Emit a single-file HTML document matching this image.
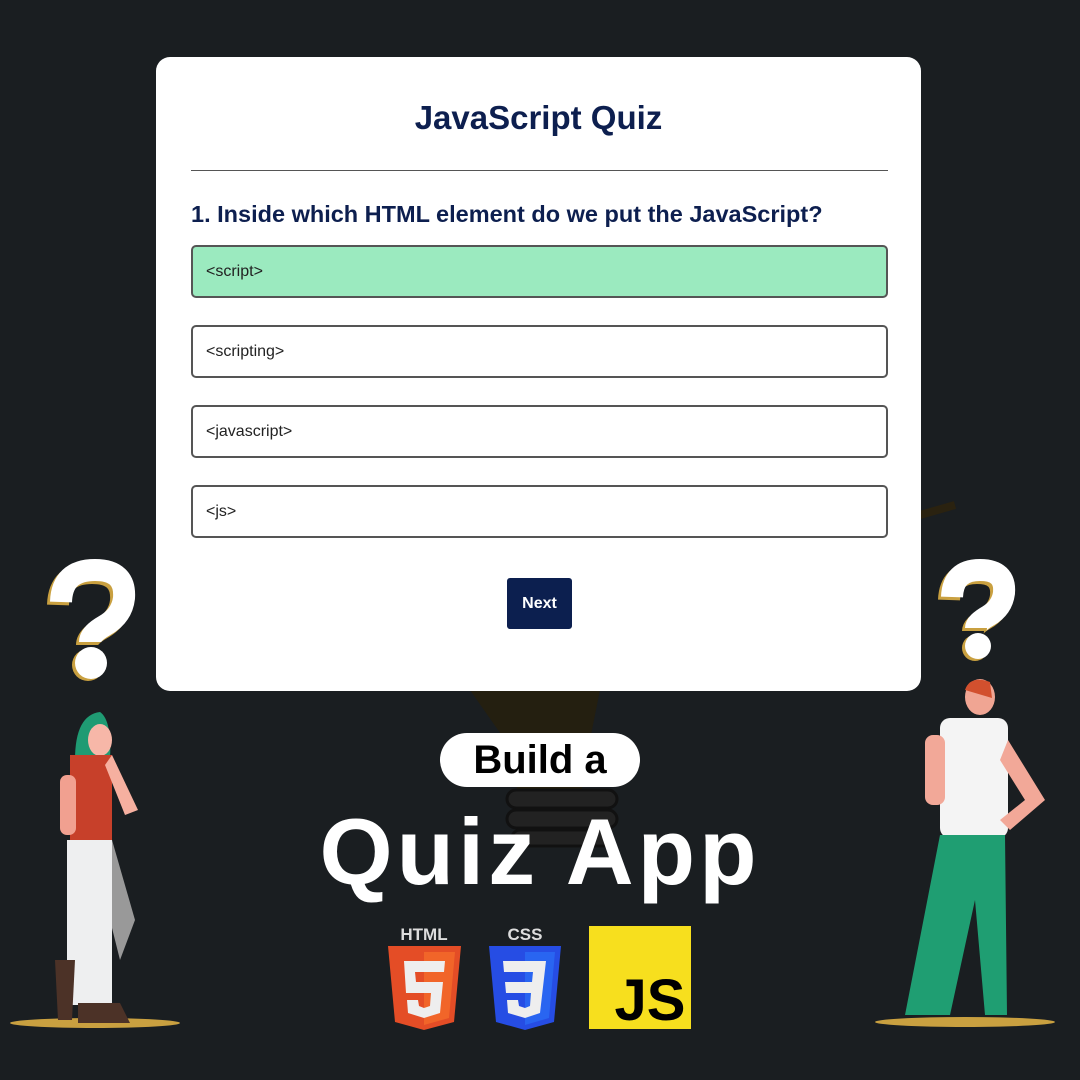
<!DOCTYPE html>
<html><head><meta charset="utf-8"><style>
body{margin:0;width:1080px;height:1080px;background:#1a1e21;position:relative;overflow:hidden;font-family:"Liberation Sans",sans-serif}
.card{position:absolute;left:156px;top:57px;width:765px;height:634px;background:#fff;border-radius:14px}
.t{position:absolute;top:42px;left:0;width:100%;text-align:center;font-size:33px;font-weight:bold;color:#0d1f4f}
.hr{position:absolute;left:35px;top:113px;width:697px;height:1px;background:#555}
.q{position:absolute;left:35px;top:144px;font-size:23.5px;font-weight:bold;color:#0d1f4f}
.o{position:absolute;left:35px;height:49px;border:2px solid #555;border-radius:5px;font-size:16px;color:#222;line-height:49px;padding-left:13px;box-sizing:content-box;width:680px}
.nx{position:absolute;left:351px;top:521px;width:65px;height:51px;background:#0c1f4f;border-radius:3px;color:#fff;font-size:16px;font-weight:bold;text-align:center;line-height:51px}
.pill{position:absolute;left:440px;top:733px;width:200px;height:54px;background:#fff;border-radius:27px;text-align:center;font-size:40px;font-weight:900;line-height:54px;color:#000}
.big{position:absolute;left:0;width:1080px;top:798px;text-align:center;font-size:94px;font-weight:900;color:#fff;letter-spacing:4px}
</style></head><body>
<svg style="position:absolute;left:0;top:0" width="1080" height="1080">
<path d="M470 690 L600 690 L590 740 L580 800 L520 800 L505 740Z" fill="#241f10"/>
<g fill="#222" stroke="#111" stroke-width="3"><rect x="507" y="790" width="110" height="18" rx="9"/><rect x="507" y="810" width="110" height="18" rx="9"/><rect x="512" y="830" width="100" height="16" rx="8"/></g>
<path d="M920 515 L955 505" stroke="#2a2210" stroke-width="8"/>
<g fill="none" stroke-width="22" stroke-linecap="butt">
<path d="M61 602 Q62 570 95 570 Q126 570 124 598 Q122 616 104 626 Q90 634 90 642" stroke="#c9a040" transform="translate(-3,3)"/>
<path d="M61 602 Q62 570 95 570 Q126 570 124 598 Q122 616 104 626 Q90 634 90 642" stroke="#fff"/>
<path d="M952 597 Q953 570 980 570 Q1006 570 1004 593 Q1002 608 988 616 Q976 623 976 628" stroke="#c9a040" transform="translate(-3,3)"/>
<path d="M952 597 Q953 570 980 570 Q1006 570 1004 593 Q1002 608 988 616 Q976 623 976 628" stroke="#fff"/>
</g>
<circle cx="88" cy="665" r="16" fill="#c9a040"/><circle cx="91" cy="663" r="16" fill="#fff"/>
<circle cx="975" cy="648" r="13" fill="#c9a040"/><circle cx="978" cy="646" r="13" fill="#fff"/>
<ellipse cx="95" cy="1023" rx="85" ry="5" fill="#c9a040"/>
<path d="M75 760 Q75 715 100 712 Q112 720 110 760Z" fill="#1f9b73"/>
<ellipse cx="100" cy="740" rx="12" ry="16" fill="#f7b7a8"/>
<rect x="70" y="755" width="42" height="85" fill="#c7402a"/>
<rect x="60" y="775" width="16" height="60" rx="7" fill="#f1a090"/>
<path d="M112 755 L138 810 L125 815 L105 765Z" fill="#f6b0a0"/>
<path d="M112 840 L135 920 L120 960 L105 900Z" fill="#999"/>
<rect x="67" y="840" width="45" height="165" fill="#eeeff0"/>
<path d="M55 960 L75 960 L72 1020 L58 1020Z" fill="#4c3227"/>
<path d="M78 1003 L120 1003 L130 1023 L78 1023Z" fill="#4c3227"/>
<ellipse cx="965" cy="1022" rx="90" ry="5" fill="#c9a040"/>
<ellipse cx="980" cy="697" rx="15" ry="18" fill="#f0a593"/>
<path d="M965 690 Q970 675 990 682 L992 698 Z" fill="#d2502e"/>
<rect x="940" y="718" width="68" height="120" rx="10" fill="#f4f4f4"/>
<rect x="925" y="735" width="20" height="70" rx="8" fill="#f2a898"/>
<path d="M1008 740 L1045 800 L1010 830 L1000 820 L1025 800 L1000 760Z" fill="#f2a898"/>
<path d="M940 835 L1005 835 L1007 1015 L985 1015 L975 900 L950 1015 L905 1015Z" fill="#1f9e72"/>
</svg>
<div class="card">
<div class="t">JavaScript Quiz</div>
<div class="hr"></div>
<div class="q">1. Inside which HTML element do we put the JavaScript?</div>
<div class="o" style="top:188px;background:#9beabf">&lt;script&gt;</div>
<div class="o" style="top:268px">&lt;scripting&gt;</div>
<div class="o" style="top:348px">&lt;javascript&gt;</div>
<div class="o" style="top:428px">&lt;js&gt;</div>
<div class="nx">Next</div>
</div>
<div class="pill">Build a</div>
<div class="big">Quiz App</div>
<svg style="position:absolute;left:0;top:0" width="1080" height="1080">
<text x="424" y="940" font-size="17" font-weight="900" fill="#ddd" text-anchor="middle" font-family="Liberation Sans">HTML</text>
<path d="M388 946 L461 946 L454 1022 L424 1030 L395 1022Z" fill="#e44d26"/>
<path d="M424 952 L455 952 L449 1018 L424 1025Z" fill="#f16529"/>
<path d="M404 961 L445 961 L444 972 L415 972 L416 982 L443 982 L440 1013 L424 1018 L408 1013 L407 1000 L418 1000 L419 1006 L424 1008 L430 1006 L431 993 L406 993Z" fill="#eee"/>
<text x="525" y="940" font-size="17" font-weight="900" fill="#ddd" text-anchor="middle" font-family="Liberation Sans">CSS</text>
<path d="M489 946 L561 946 L554 1022 L525 1030 L496 1022Z" fill="#264de4"/>
<path d="M525 952 L555 952 L549 1018 L525 1025Z" fill="#2965f1"/>
<path d="M503 961 L546 961 L540 1013 L525 1018 L508 1013 L507 1000 L518 1000 L519 1006 L525 1008 L530 1006 L531 993 L506 993 L505 982 L532 982 L533 972 L504 972Z" fill="#eee"/>
<rect x="589" y="926" width="102" height="103" fill="#f7df1e"/>
<text x="650" y="1020" font-size="58" font-weight="bold" fill="#000" text-anchor="middle" font-family="Liberation Sans">JS</text>
</svg>
</body></html>
